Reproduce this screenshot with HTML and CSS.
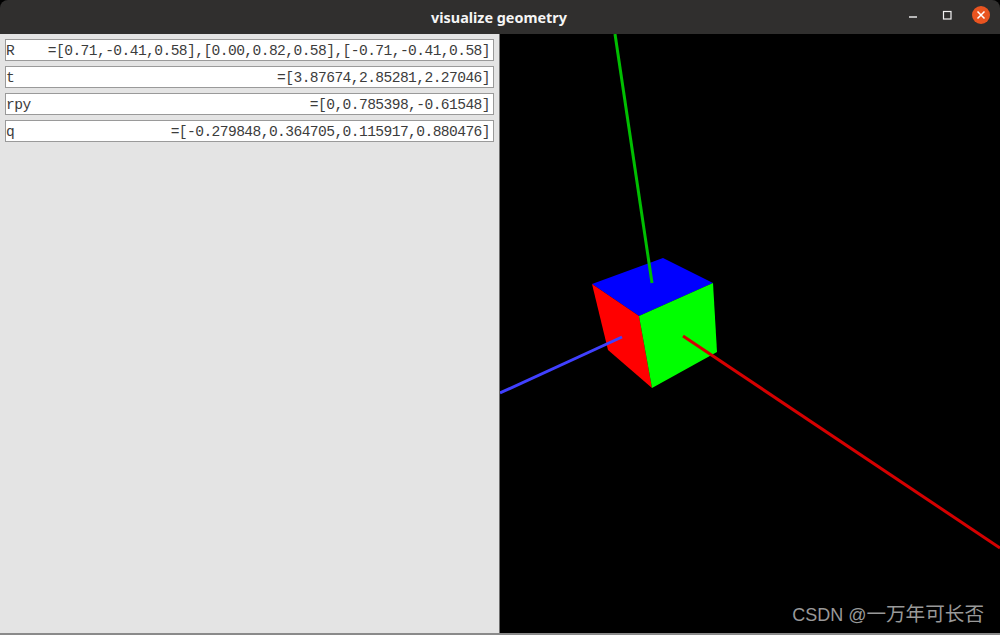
FILE: index.html
```html
<!DOCTYPE html>
<html lang="en">
<head>
<meta charset="utf-8">
<title>visualize geometry</title>
<link rel="stylesheet" href="styles.css">
</head>
<body>
<div class="window">
  <header class="titlebar">
    <span class="title">visualize geometry</span>
    <div class="controls">
      <svg class="ctl" width="16" height="16" viewBox="0 0 16 16"><path d="M1 10H9" stroke="#f2f2f2" stroke-width="1.4" fill="none"/></svg>
      <svg class="ctl" width="16" height="16" viewBox="0 0 16 16"><rect x="3.500" y="4.500" width="7.500" height="7.500" stroke="#f2f2f2" stroke-width="1.200" fill="none"/></svg>
      <svg class="ctl" width="18" height="18" viewBox="0 0 18 18"><circle cx="9" cy="9" r="9" fill="#e95420"/><path d="M5.500 5.500L12.500 12.500M12.500 5.500L5.500 12.500" stroke="#fff" stroke-width="1.500" fill="none"/></svg>
    </div>
  </header>
  <main class="content">
    <aside class="panel">
      <div class="field"><span>R</span><span>=[0.71,-0.41,0.58],[0.00,0.82,0.58],[-0.71,-0.41,0.58]</span></div>
      <div class="field"><span>t</span><span>=[3.87674,2.85281,2.27046]</span></div>
      <div class="field"><span>rpy</span><span>=[0,0.785398,-0.61548]</span></div>
      <div class="field"><span>q</span><span>=[-0.279848,0.364705,0.115917,0.880476]</span></div>
    </aside>
    <section class="view">
      <svg class="scene" width="500" height="599" viewBox="500 34 500 599">
        <polygon points="592,284 663,258 713,283 639,316" fill="#0000ff"/>
        <polygon points="592,284 639,316 652,388 608,350" fill="#ff0000"/>
        <polygon points="639,316 713,283 717,352 652,388" fill="#00ff00"/>
        <line x1="615" y1="34" x2="652" y2="283" stroke="#00bf00" stroke-width="3"/>
        <line x1="500" y1="393" x2="622" y2="337" stroke="#4040ff" stroke-width="3"/>
        <line x1="683" y1="336" x2="1000" y2="548" stroke="#d40000" stroke-width="3"/>
      </svg>
      <span class="mark">CSDN @<span class="mark-cjk">一万年可长否</span></span>
    </section>
  </main>
</div>
</body>
</html>
```
FILE: styles.css
```css
html, body {
  margin: 0;
  padding: 0;
  background: #000;
}
.window {
  width: 1000px;
  height: 635px;
  display: flex;
  flex-direction: column;
  overflow: hidden;
  border-bottom: 2px solid #8a8a8a;
  box-sizing: border-box;
}
.titlebar {
  height: 34px;
  flex: none;
  background: #302f2e;
  border-radius: 8px 8px 0 0;
  display: flex;
  align-items: center;
  justify-content: center;
  position: relative;
}
.title {
  color: #f5f5f5;
  font: bold 14.4px "Noto Sans", sans-serif;
  margin-left: -2px;
}
.controls {
  position: absolute;
  right: 10px;
  top: 6px;
  display: flex;
  align-items: center;
  gap: 16px;
}
.content {
  flex: 1;
  display: flex;
  min-height: 0;
}
.panel {
  width: 500px;
  box-sizing: border-box;
  background: #e4e4e4;
  border-right: 1px solid #6e6e6e;
  padding: 5px 5px 0 5px;
  display: flex;
  flex-direction: column;
  gap: 5px;
}
.field {
  height: 22px;
  box-sizing: border-box;
  background: #fff;
  border: 1px solid #9a9a9a;
  display: flex;
  justify-content: space-between;
  align-items: center;
  padding: 2px 3px 0 0;
  font: 14.6px "Liberation Mono", monospace;
  letter-spacing: -0.57px;
  color: #3c3c3c;
  white-space: pre;
}
.view {
  flex: 1;
  background: #000;
  position: relative;
  overflow: hidden;
}
.scene {
  display: block;
}
.mark {
  position: absolute;
  right: 16px;
  bottom: 6px;
  color: #999;
  font: 18px "Liberation Sans", "Noto Sans CJK SC", sans-serif;
  white-space: nowrap;
}
.mark-cjk {
  font-size: 19.6px;
}
```
